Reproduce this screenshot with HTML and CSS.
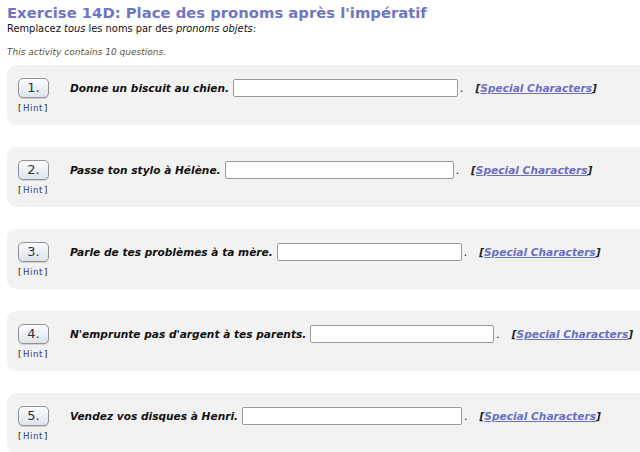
FILE: index.html
```html
<!DOCTYPE html>
<html lang="fr">
<head>
<meta charset="utf-8">
<title>Exercise 14D</title>
<link rel="stylesheet" href="styles.css">
</head>
<body>
<h1 class="title">Exercise 14D: Place des pronoms après l'impératif</h1>
<p class="instr">Remplacez <em>tous</em> les noms par des <em>pronoms objets</em>:</p>
<p class="note">This activity contains 10 questions.</p>
<div class="questions">
  <div class="card">
    <div class="num"><span class="btn">1.</span><span class="hint">[<a href="#">Hint</a>]</span></div>
    <div class="q"><span class="qtext">Donne un biscuit au chien.</span><input class="ans" type="text" style="width:225px"><span class="dot">.</span><span class="spec">[<a href="#">Special Characters</a>]</span></div>
  </div>
  <div class="card">
    <div class="num"><span class="btn">2.</span><span class="hint">[<a href="#">Hint</a>]</span></div>
    <div class="q"><span class="qtext">Passe ton stylo à Hélène.</span><input class="ans" type="text" style="width:229px"><span class="dot">.</span><span class="spec">[<a href="#">Special Characters</a>]</span></div>
  </div>
  <div class="card">
    <div class="num"><span class="btn">3.</span><span class="hint">[<a href="#">Hint</a>]</span></div>
    <div class="q"><span class="qtext">Parle de tes problèmes à ta mère.</span><input class="ans" type="text" style="width:185px"><span class="dot">.</span><span class="spec">[<a href="#">Special Characters</a>]</span></div>
  </div>
  <div class="card">
    <div class="num"><span class="btn">4.</span><span class="hint">[<a href="#">Hint</a>]</span></div>
    <div class="q"><span class="qtext">N'emprunte pas d'argent à tes parents.</span><input class="ans" type="text" style="width:184px"><span class="dot">.</span><span class="spec">[<a href="#">Special Characters</a>]</span></div>
  </div>
  <div class="card">
    <div class="num"><span class="btn">5.</span><span class="hint">[<a href="#">Hint</a>]</span></div>
    <div class="q"><span class="qtext">Vendez vos disques à Henri.</span><input class="ans" type="text" style="width:220px"><span class="dot">.</span><span class="spec">[<a href="#">Special Characters</a>]</span></div>
  </div>
</div>
</body>
</html>
```
FILE: styles.css
```css
html, body {
  margin: 0;
  background: #ffffff;
}
body {
  padding: 3px 0 0 7px;
  font-family: "DejaVu Sans", Verdana, sans-serif;
  color: #000;
  overflow: hidden;
  width: 640px;
  box-sizing: border-box;
}
.title {
  margin: 0;
  font-size: 14.8px;
  line-height: 19px;
  font-weight: bold;
  color: #6f76c2;
}
.instr {
  margin: 0;
  font-size: 9.9px;
  line-height: 13px;
  color: #111;
}
.note {
  margin: 11px 0 0;
  font-size: 9px;
  line-height: 12px;
  font-style: italic;
  color: #5f5535;
}
.questions {
  margin-top: 7px;
  display: flex;
  flex-direction: column;
  gap: 22px;
}
.card {
  background: #f3f2f2;
  border-radius: 9px 0 0 9px;
  height: 60px;
  margin-right: -20px;
  box-sizing: border-box;
  padding: 13px 0 0 11px;
  display: flex;
  align-items: flex-start;
}
.num {
  width: 52px;
  display: flex;
  flex-direction: column;
  align-items: flex-start;
}
.btn {
  width: 29px;
  height: 18px;
  border: 1px solid #8e9399;
  border-radius: 5px;
  background: linear-gradient(#fbfcfd, #dde4eb);
  box-shadow: 0 1px 1px rgba(0,0,0,0.15);
  font-size: 13px;
  line-height: 18px;
  text-align: center;
  color: #333;
}
.hint {
  margin-top: 5px;
  font-size: 8.6px;
  line-height: 10px;
  color: #222;
  letter-spacing: 0.6px;
}
.hint a {
  color: #2b3a8a;
  text-decoration: none;
  margin: 0 1px;
}
.q {
  display: flex;
  align-items: center;
  height: 19px;
  font-size: 10.6px;
}
.qtext {
  font-weight: bold;
  font-style: italic;
  color: #111;
  margin-right: 4px;
}
.ans {
  height: 18px;
  box-sizing: border-box;
  border: 1px solid #9a9a9a;
  border-radius: 2px;
  background: #fff;
  padding: 0 2px;
  margin: 0;
}
.dot {
  margin: 0 12px 0 2px;
}
.spec {
  font-weight: bold;
  font-style: italic;
  color: #222;
}
.spec a {
  color: #6b70c0;
  text-decoration: underline;
}
```
